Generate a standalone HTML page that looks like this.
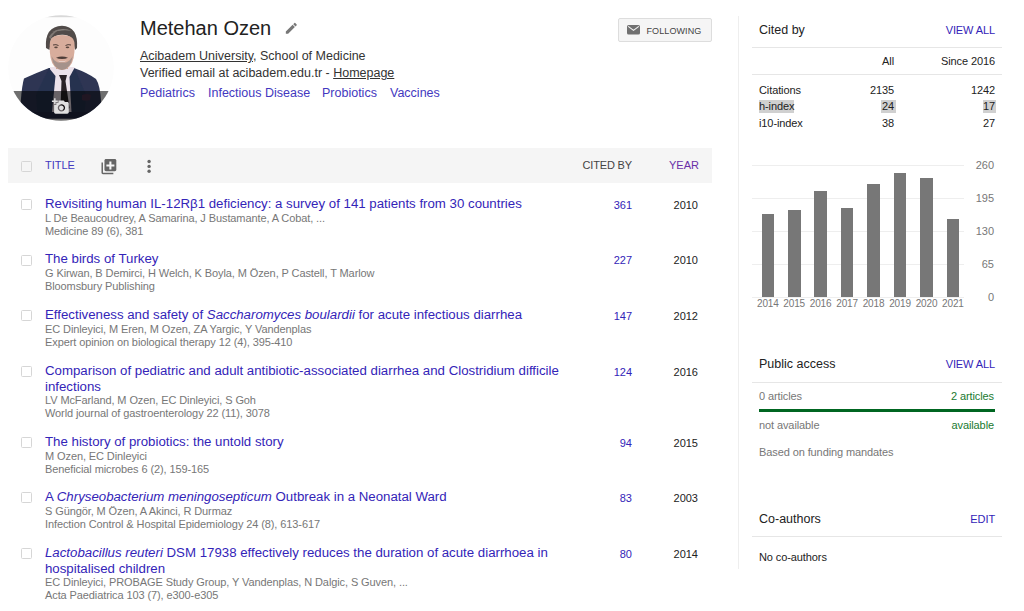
<!DOCTYPE html>
<html><head><meta charset="utf-8">
<style>
*{margin:0;padding:0;box-sizing:border-box}
html,body{width:1024px;height:611px;overflow:hidden;background:#fff;font-family:"Liberation Sans",sans-serif;color:#222}
.abs{position:absolute;white-space:nowrap}
a{color:#1a0dab;text-decoration:none}
#photo{position:absolute;left:8px;top:15px;width:106px;height:106px}
.name{left:140px;top:16px;font-size:20px;color:#222;line-height:24px}
.aff{left:140px;font-size:12.5px;color:#333;line-height:16px}
.aff u{text-decoration:underline}
.int{top:85px;font-size:12.5px;color:#4338c0;line-height:16px}
#btn{position:absolute;left:618px;top:18px;width:94px;height:24px;background:#f5f5f5;border:1px solid #ddd;border-radius:2px}
#btn span{position:absolute;left:27.5px;top:7px;font-size:9px;color:#444;line-height:11px;letter-spacing:0.1px}
#thead{position:absolute;left:8px;top:148px;width:704px;height:35px;background:#f5f5f5}
.cb{position:absolute;width:11px;height:11px;border:1px solid #d6d6d6;background:#fff;border-radius:1.5px}
#thead .cb{background:#f5f5f5}
.th{font-size:11px;line-height:13px;top:159px}
.t{left:45px;font-size:13.25px;line-height:16px;color:#3324b8;white-space:nowrap}
.g{left:45px;font-size:11px;line-height:13px;color:#777;letter-spacing:-0.1px}
.num{font-size:11px;line-height:13px;text-align:right}
.cit{color:#3324b8;right:392px}
.yr{color:#222;right:326px}
#rb{position:absolute;left:738px;top:16px;width:1px;height:553px;background:#eee}
.hr{position:absolute;left:752px;width:250px;height:1px;background:#e6e6e6}
.rt{font-size:12.5px;line-height:16px;color:#222}
.hl{position:absolute;height:13px;background:#d0d0d0}
.va{font-size:11px;line-height:14px;color:#3324b8;right:29px;letter-spacing:-0.1px}
.st{font-size:11px;line-height:14px;color:#222;letter-spacing:-0.1px}
.r{text-align:right}
.bar{position:absolute;width:12.5px;background:#777}
.xl{top:297.5px;width:40px;text-align:center;font-size:10px;letter-spacing:-0.15px;line-height:12px;color:#777}
.yl{right:30px;font-size:11px;line-height:14px;color:#777;text-align:right}
.pa{font-size:11px;line-height:14px;letter-spacing:-0.1px}
</style></head><body>

<svg id="photo" viewBox="0 0 106 106">
<defs><clipPath id="cp"><circle cx="53" cy="53" r="52.8"/></clipPath>
<filter id="bl" x="-10%" y="-10%" width="120%" height="120%"><feGaussianBlur stdDeviation="0.55"/></filter></defs>
<g clip-path="url(#cp)">
<rect width="106" height="106" fill="#fdfdfd"/>
<rect x="0" y="0" width="106" height="2.2" fill="#d8d8d8"/>
<g filter="url(#bl)">
<path d="M16 63.5 Q28 58 41 53 L66 53 Q80 58 88 64 Q92 70 93 86 L93 103.5 L13 103.5 L12.8 86 Q14 70 16 63.5 Z" fill="#2d3553"/>
<path d="M42 52 L66.5 52 L66 97 L42.5 97 Z" fill="#ece2ea"/>
<path d="M41 53 L47.5 61 L44 97 L30 103.5 L28 80 Z" fill="#283050"/>
<path d="M66.5 53 L61.5 62 L63.5 97 L76 103.5 L78 80 Z" fill="#283050"/>
<path d="M13 97 L93 97 L93 103.5 L13 103.5 Z" fill="#232a45"/>
<path d="M51 60 L59 60 L57.5 66 L61.5 93 L57 97 L52.5 93 L53.5 66 Z" fill="#2a2328"/>
<rect x="48" y="46" width="12" height="8" fill="#c9a593"/>
<path d="M38 33 Q36.5 11.5 54 10.8 Q70.5 11.5 69 33 L67 35 L64.5 24 Q60 19.5 54 19.8 Q47 20 43 24 L41.5 35 Z" fill="#514b48"/>
<path d="M44 17 Q54 11.5 64 16 Q57 14.5 50 16 Z" fill="#8a8480"/><path d="M41 22 Q45 15 52 14.5 Q46 17 42.5 24 Z" fill="#7d7672"/>
<path d="M41.7 30 Q42 22.5 47 21 Q54 19 61 21 Q66.5 22.5 66.6 30 Q67 46 61.5 51.5 Q57.5 55 54 55 Q50.5 55 46.5 51.5 Q41.2 46 41.7 30 Z" fill="#d8ad9c"/>
<path d="M43.5 41 Q45 53.5 54 55 Q63 53.5 64.8 41 Q62 46 58 47.5 L50 47.5 Q46 46 43.5 41 Z" fill="#9c8d88" opacity="0.85"/>
<path d="M48 42.8 Q54 40.4 60 42.8 Q57.5 44 54 44 Q50.5 44 48 42.8 Z" fill="#4d3c37"/>
<path d="M49 45.5 Q54 48 59 45.5 Q54 47 49 45.5 Z" fill="#f2eeee"/>
<path d="M45 30 Q48 29 50.5 30.5" stroke="#3e302c" stroke-width="0.9" fill="none"/>
<path d="M57.5 30.5 Q60 29 63 30" stroke="#3e302c" stroke-width="0.9" fill="none"/>
<ellipse cx="48" cy="32.3" rx="1.8" ry="0.9" fill="#5a463e"/>
<ellipse cx="59.5" cy="32.3" rx="1.8" ry="0.9" fill="#5a463e"/>
<path d="M74 80 Q79 78 83 80 L82 85 Q78 86 74 85 Z" fill="#4a3050"/>
</g>
<rect x="0" y="76" width="106" height="30" fill="#000" opacity="0.56"/>
<g filter="url(#bl)">
<path transform="translate(43.9 82.6) scale(0.733)" fill="#e0e0e0" fill-rule="nonzero" d="M3 4V1h2v3h3v2H5v3H3V6H0V4h3zm3 6V7h3V4h7l1.83 2H21c1.1 0 2 .9 2 2v12c0 1.1-.9 2-2 2H5c-1.1 0-2-.9-2-2V10h3zm7 9c2.76 0 5-2.24 5-5s-2.24-5-5-5-5 2.24-5 5 2.24 5 5 5zm-3.2-5c0 1.77 1.43 3.2 3.2 3.2s3.2-1.43 3.2-3.2-1.43-3.2-3.2-3.2-3.2 1.43-3.2 3.2z"/>
</g>
</g>
</svg>

<div class="abs name">Metehan Ozen</div>
<svg class="abs" style="left:283.6px;top:20.6px" width="14.7" height="14.7" viewBox="0 0 24 24"><path fill="#777" d="M3 17.25V21h3.75L17.81 9.94l-3.75-3.75L3 17.25zM20.71 7.04a1 1 0 0 0 0-1.41l-2.34-2.34a1 1 0 0 0-1.41 0l-1.83 1.83 3.75 3.75 1.83-1.83z"/></svg>
<div class="abs aff" style="top:48px"><u>Acibadem University</u>, School of Medicine</div>
<div class="abs aff" style="top:65px">Verified email at acibadem.edu.tr - <u>Homepage</u></div>
<div class="abs int" style="left:140px">Pediatrics</div>
<div class="abs int" style="left:208px">Infectious Disease</div>
<div class="abs int" style="left:322px">Probiotics</div>
<div class="abs int" style="left:390px">Vaccines</div>

<div id="btn"><svg style="position:absolute;left:7.9px;top:6.3px" width="13" height="9.5" viewBox="0 0 13 9.5"><rect width="13" height="9.5" rx="1.6" fill="#707070"/><path d="M1.2 1.4 L6.5 5.4 L11.8 1.4" stroke="#f5f5f5" stroke-width="1.1" fill="none"/></svg><span>FOLLOWING</span></div>

<div id="thead"></div>
<div class="cb" style="left:21px;top:161px;background:#f5f5f5"></div>
<div class="abs th" style="left:45px;color:#4338c0">TITLE</div>
<svg class="abs" style="left:99.5px;top:158px" width="17.8" height="17.8" viewBox="0 0 24 24"><path fill="#666" d="M4 6H2v14c0 1.1.9 2 2 2h14v-2H4V6z"/><path fill="#666" d="M8 1.5h12c1.1 0 2 .9 2 2v12.5c0 1.1-.9 2-2 2H8c-1.1 0-2-.9-2-2V3.5c0-1.1.9-2 2-2z"/><path fill="#f5f5f5" d="M12.6 4.8h2.8v4h4v2.8h-4v4h-2.8v-4h-4v-2.8h4z"/></svg>
<svg class="abs" style="left:146px;top:159px" width="6" height="15" viewBox="0 0 6 15"><circle cx="3.1" cy="2.5" r="1.7" fill="#666"/><circle cx="3.1" cy="7.4" r="1.7" fill="#666"/><circle cx="3.1" cy="12.3" r="1.7" fill="#666"/></svg>
<div class="abs th num" style="right:392px;color:#444;letter-spacing:-0.15px">CITED BY</div>
<div class="abs th num" style="right:325px;color:#6a2fa8">YEAR</div>

<!-- rows -->
<div class="cb" style="left:21px;top:199px"></div>
<div class="abs t" style="top:196px">Revisiting human IL-12Rβ1 deficiency: a survey of 141 patients from 30 countries</div>
<div class="abs g" style="top:212px">L De Beaucoudrey, A Samarina, J Bustamante, A Cobat, ...</div>
<div class="abs g" style="top:225px">Medicine 89 (6), 381</div>
<div class="abs num cit" style="top:199px">361</div>
<div class="abs num yr" style="top:199px">2010</div>

<div class="cb" style="left:21px;top:255px"></div>
<div class="abs t" style="top:251px">The birds of Turkey</div>
<div class="abs g" style="top:267px">G Kirwan, B Demirci, H Welch, K Boyla, M Özen, P Castell, T Marlow</div>
<div class="abs g" style="top:280px">Bloomsbury Publishing</div>
<div class="abs num cit" style="top:254px">227</div>
<div class="abs num yr" style="top:254px">2010</div>

<div class="cb" style="left:21px;top:310px"></div>
<div class="abs t" style="top:307px">Effectiveness and safety of <i>Saccharomyces boulardii</i> for acute infectious diarrhea</div>
<div class="abs g" style="top:323px">EC Dinleyici, M Eren, M Ozen, ZA Yargic, Y Vandenplas</div>
<div class="abs g" style="top:336px">Expert opinion on biological therapy 12 (4), 395-410</div>
<div class="abs num cit" style="top:310px">147</div>
<div class="abs num yr" style="top:310px">2012</div>

<div class="cb" style="left:21px;top:366px"></div>
<div class="abs t" style="top:363px">Comparison of pediatric and adult antibiotic-associated diarrhea and Clostridium difficile</div>
<div class="abs t" style="top:379px">infections</div>
<div class="abs g" style="top:394px">LV McFarland, M Ozen, EC Dinleyici, S Goh</div>
<div class="abs g" style="top:407px">World journal of gastroenterology 22 (11), 3078</div>
<div class="abs num cit" style="top:366px">124</div>
<div class="abs num yr" style="top:366px">2016</div>

<div class="cb" style="left:21px;top:437px"></div>
<div class="abs t" style="top:434px">The history of probiotics: the untold story</div>
<div class="abs g" style="top:450px">M Ozen, EC Dinleyici</div>
<div class="abs g" style="top:463px">Beneficial microbes 6 (2), 159-165</div>
<div class="abs num cit" style="top:437px">94</div>
<div class="abs num yr" style="top:437px">2015</div>

<div class="cb" style="left:21px;top:492px"></div>
<div class="abs t" style="top:489px">A <i>Chryseobacterium meningosepticum</i> Outbreak in a Neonatal Ward</div>
<div class="abs g" style="top:505px">S Güngör, M Özen, A Akinci, R Durmaz</div>
<div class="abs g" style="top:518px">Infection Control &amp; Hospital Epidemiology 24 (8), 613-617</div>
<div class="abs num cit" style="top:492px">83</div>
<div class="abs num yr" style="top:492px">2003</div>

<div class="cb" style="left:21px;top:548px"></div>
<div class="abs t" style="top:545px"><i>Lactobacillus reuteri</i> DSM 17938 effectively reduces the duration of acute diarrhoea in</div>
<div class="abs t" style="top:561px">hospitalised children</div>
<div class="abs g" style="top:576px">EC Dinleyici, PROBAGE Study Group, Y Vandenplas, N Dalgic, S Guven, ...</div>
<div class="abs g" style="top:589px">Acta Paediatrica 103 (7), e300-e305</div>
<div class="abs num cit" style="top:548px">80</div>
<div class="abs num yr" style="top:548px">2014</div>

<!-- right column -->
<div id="rb"></div>
<div class="abs rt" style="left:759px;top:22px">Cited by</div>
<div class="abs va" style="top:23px">VIEW ALL</div>
<div class="hr" style="top:47px"></div>
<div class="abs st r" style="right:130px;top:54px">All</div>
<div class="abs st r" style="right:29px;top:54px">Since 2016</div>
<div class="hr" style="top:74px"></div>
<div class="abs st" style="left:759px;top:83px">Citations</div>
<div class="abs st r" style="right:130px;top:83px">2135</div>
<div class="abs st r" style="right:29px;top:83px">1242</div>
<div class="hl" style="left:759px;top:100px;width:35px"></div>
<div class="hl" style="left:881px;top:100px;width:15px"></div>
<div class="hl" style="left:983px;top:100px;width:13px"></div>
<div class="abs st" style="left:759px;top:99px">h-index</div>
<div class="abs st r" style="right:130px;top:99px">24</div>
<div class="abs st r" style="right:29px;top:99px">17</div>
<div class="abs st" style="left:759px;top:116px">i10-index</div>
<div class="abs st r" style="right:130px;top:116px">38</div>
<div class="abs st r" style="right:29px;top:116px">27</div>

<!-- chart -->
<div class="hr" style="top:165px;width:212px;background:#eee"></div>
<div class="hr" style="top:198px;width:212px;background:#eee"></div>
<div class="hr" style="top:231px;width:212px;background:#eee"></div>
<div class="hr" style="top:264px;width:212px;background:#eee"></div>
<div class="hr" style="top:297px;width:212px;background:#eee"></div>
<div class="bar" style="left:761.5px;top:214px;height:83px"></div>
<div class="abs xl" style="left:747.8px">2014</div>
<div class="bar" style="left:788.0px;top:210px;height:87px"></div>
<div class="abs xl" style="left:774.2px">2015</div>
<div class="bar" style="left:814.4px;top:191px;height:106px"></div>
<div class="abs xl" style="left:800.6px">2016</div>
<div class="bar" style="left:840.9px;top:208px;height:89px"></div>
<div class="abs xl" style="left:827.1px">2017</div>
<div class="bar" style="left:867.3px;top:184px;height:113px"></div>
<div class="abs xl" style="left:853.5px">2018</div>
<div class="bar" style="left:893.8px;top:173px;height:124px"></div>
<div class="abs xl" style="left:880.0px">2019</div>
<div class="bar" style="left:920.2px;top:178px;height:119px"></div>
<div class="abs xl" style="left:906.5px">2020</div>
<div class="bar" style="left:946.6px;top:219px;height:78px"></div>
<div class="abs xl" style="left:932.9px">2021</div>
<div class="abs yl" style="top:158px">260</div>
<div class="abs yl" style="top:191px">195</div>
<div class="abs yl" style="top:224px">130</div>
<div class="abs yl" style="top:257px">65</div>
<div class="abs yl" style="top:290px">0</div>

<!-- public access -->
<div class="abs rt" style="left:759px;top:356px">Public access</div>
<div class="abs va" style="top:357px">VIEW ALL</div>
<div class="hr" style="top:382px"></div>
<div class="abs pa" style="left:759px;top:389px;color:#777">0 articles</div>
<div class="abs pa r" style="right:30px;top:389px;color:#1a7a30">2 articles</div>
<div style="position:absolute;left:759px;top:409px;width:236px;height:3px;background:#006621"></div>
<div class="abs pa" style="left:759px;top:418px;color:#777">not available</div>
<div class="abs pa r" style="right:30px;top:418px;color:#1a7a30">available</div>
<div class="abs pa" style="left:759px;top:445px;color:#777">Based on funding mandates</div>

<!-- co-authors -->
<div class="abs rt" style="left:759px;top:511px">Co-authors</div>
<div class="abs va" style="top:512px">EDIT</div>
<div class="hr" style="top:536px"></div>
<div class="abs pa" style="left:759px;top:550px;color:#222">No co-authors</div>
</body></html>
